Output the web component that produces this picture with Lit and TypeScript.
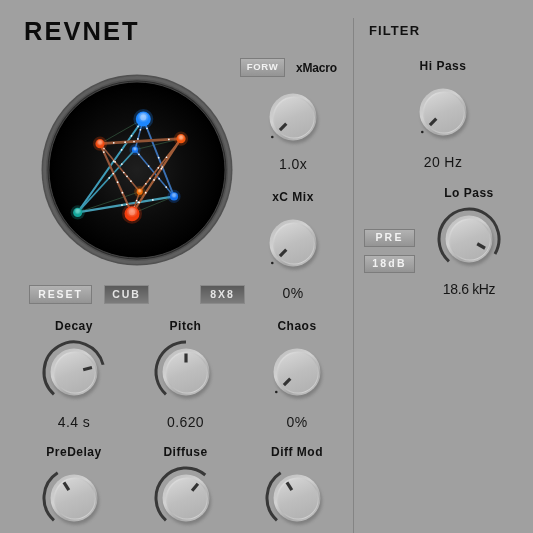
import { LitElement, html, css, svg } from "lit";
import { customElement, property } from "lit/decorators.js";

@customElement("rv-knob")
class RvKnob extends LitElement {
  @property() label = "";
  @property() value = "";
  @property({ type: Number }) angle = -135;
  static styles = css`
    :host { display: flex; flex-direction: column; align-items: center; width: 100px; font-family: "Liberation Sans", Arial, sans-serif; }
    .label { height: 16px; line-height: 16px; font-size: 12px; font-weight: 700; letter-spacing: 0.5px; color: #111; white-space: nowrap; }
    svg { display: block; width: 68px; height: 68px; margin-top: 4px; overflow: visible; }
    .value { height: 16px; line-height: 16px; margin-top: var(--vgap, 8px); font-size: 14px; letter-spacing: var(--vls, 0.4px); color: #161616; white-space: nowrap; }
  `;
  private pt(r: number, deg: number) {
    const a = (deg * Math.PI) / 180;
    return [r * Math.sin(a), -r * Math.cos(a)];
  }
  render() {
    const start = -138;
    const [sx, sy] = this.pt(30, start);
    const [ex, ey] = this.pt(30, this.angle);
    const large = this.angle - start > 180 ? 1 : 0;
    const [ix, iy] = this.pt(9.5, this.angle);
    const [jx, jy] = this.pt(18.5, this.angle);
    const atMin = this.angle <= -135;
    return html`
      <div class="label">${this.label}</div>
      <svg viewBox="-34 -34 68 68">
        <defs>
          <linearGradient id="cap" x1="0.25" y1="0" x2="0.65" y2="1">
            <stop offset="0" stop-color="#d4d4d4" />
            <stop offset="0.5" stop-color="#bebebe" />
            <stop offset="1" stop-color="#b2b2b2" />
          </linearGradient>
          <linearGradient id="rim" x1="0.1" y1="0" x2="0.8" y2="1">
            <stop offset="0" stop-color="#bdbdbd" />
            <stop offset="0.4" stop-color="#d2d2d2" />
            <stop offset="0.75" stop-color="#a8a8a8" />
            <stop offset="1" stop-color="#c6c6c6" />
          </linearGradient>
          <linearGradient id="inner" x1="0.1" y1="0" x2="0.8" y2="1">
            <stop offset="0" stop-color="#e4e4e4" />
            <stop offset="0.55" stop-color="#b6b6b6" />
            <stop offset="1" stop-color="#d8d8d8" />
          </linearGradient>
          <filter id="blur" x="-30%" y="-30%" width="160%" height="160%"><feGaussianBlur stdDeviation="1.8" /></filter>
        </defs>
        <circle cx="1.5" cy="3.2" r="23.5" fill="#666" opacity="0.55" filter="url(#blur)" />
        <circle r="23.5" fill="url(#rim)" />
        <circle cx="0.8" cy="0.5" r="21" fill="url(#inner)" />
        <circle cx="1" cy="0.8" r="19.8" fill="url(#cap)" />
        ${atMin
          ? svg`<circle cx="${-20.7}" cy="${20}" r="1.3" fill="#222" />`
          : svg`<path d="M${sx} ${sy} A30 30 0 ${large} 1 ${ex} ${ey}" fill="none" stroke="#383838" stroke-width="3" />`}
        <line x1="${ix}" y1="${iy}" x2="${jx}" y2="${jy}" stroke="#333" stroke-width="3.2" />
      </svg>
      <div class="value">${this.value}</div>
    `;
  }
}

const nodes: Record<string, [number, number, number, string, string]> = {
  bb: [143.3, 119.3, 7.5, "#1c86ff", "#a8d0ff"],
  tr: [181, 139, 4.6, "#f2560f", "#ffb080"],
  tl: [100, 144, 4.6, "#f04a10", "#ff9a70"],
  sb: [135, 150, 3.1, "#1878f5", "#80b8ff"],
  om: [139.7, 192, 3.1, "#f06a05", "#ffb060"],
  br: [174, 196.7, 4.1, "#1470f0", "#70b0ff"],
  te: [77.7, 212.7, 4.6, "#12a59a", "#50d0c4"],
  bo: [132, 214, 7.5, "#f23c0c", "#ff9a78"],
};
const edges: [string, string, string, number, number[]][] = [
  ["te", "bb", "#3f9dba", 2, [0.55, 0.67, 0.82, 0.92]],
  ["te", "sb", "#3a94ae", 1.7, [0.55, 0.62, 0.77]],
  ["te", "br", "#459cb2", 2.2, [0.46, 0.51, 0.63, 0.78]],
  ["bb", "br", "#3a70b4", 1.9, [0.12, 0.5, 0.62]],
  ["sb", "br", "#3a70b4", 1.5, [0.1, 0.35, 0.62, 0.8]],
  ["sb", "bb", "#3a70b4", 1.5, [0.35, 0.65]],
  ["tl", "tr", "#8f5234", 2.8, [0.17, 0.31, 0.42, 0.85]],
  ["tl", "bo", "#94563a", 2.1, [0.12, 0.55, 0.7]],
  ["tl", "om", "#94563a", 1.6, [0.1, 0.38, 0.6, 0.68, 0.78]],
  ["tr", "bo", "#a05c38", 2.2, [0.4, 0.55, 0.72, 0.85]],
  ["tr", "om", "#a05c38", 1.7, [0.35, 0.55, 0.75, 0.85]],
  ["om", "bo", "#94563a", 1.5, [0.4, 0.7]],
];
const faint: [string, string][] = [["te", "om"], ["sb", "tr"], ["bb", "tl"], ["bo", "br"]];

@customElement("rv-scope")
class RvScope extends LitElement {
  static styles = css`
    :host { display: block; width: 196px; height: 196px; }
    svg { display: block; width: 196px; height: 196px; overflow: visible; }
  `;
  render() {
    return html`<svg viewBox="39 72.3 196 196">
      <defs>
        <radialGradient id="bg">
          <stop offset="0" stop-color="#1f1f1f" />
          <stop offset="0.55" stop-color="#0c0c0c" />
          <stop offset="1" stop-color="#000" />
        </radialGradient>
        <radialGradient id="shine" cx="0.5" cy="0.35" r="0.6">
          <stop offset="0" stop-color="#fff" stop-opacity="0.55" />
          <stop offset="1" stop-color="#fff" stop-opacity="0" />
        </radialGradient>
        <filter id="soft" x="-20%" y="-20%" width="140%" height="140%"><feGaussianBlur stdDeviation="0.35" /></filter>
        <filter id="ring" x="-5%" y="-5%" width="110%" height="110%"><feGaussianBlur stdDeviation="0.7" /></filter>
      </defs>
      <circle cx="137" cy="170.3" r="95.5" fill="#515151" filter="url(#ring)" />
      <circle cx="137" cy="170.3" r="92.5" fill="none" stroke="#5e5e5e" stroke-width="3" filter="url(#ring)" />
      <circle cx="137" cy="170.3" r="89.5" fill="#2c2c2c" />
      <circle cx="137" cy="170.3" r="88" fill="#000" stroke="#555" stroke-width="0.7" />
      <circle cx="137" cy="170.3" r="86.5" fill="url(#bg)" />
      <g filter="url(#soft)">
        ${faint.map(([a, b]) => svg`<line x1="${nodes[a][0]}" y1="${nodes[a][1]}" x2="${nodes[b][0]}" y2="${nodes[b][1]}" stroke="#31503a" stroke-width="0.8" />`)}
        ${edges.map(([a, b, c, w]) => svg`<line x1="${nodes[a][0]}" y1="${nodes[a][1]}" x2="${nodes[b][0]}" y2="${nodes[b][1]}" stroke="${c}" stroke-width="${w}" />`)}
        ${edges.flatMap(([a, b, , , ts]) =>
          ts.map((t) => {
            const x = nodes[a][0] + (nodes[b][0] - nodes[a][0]) * t;
            const y = nodes[a][1] + (nodes[b][1] - nodes[a][1]) * t;
            return svg`<circle cx="${x}" cy="${y}" r="0.85" fill="#fff" />`;
          })
        )}
      </g>
      ${Object.values(nodes).map(
        ([x, y, r, c, h]) => svg`
          <circle cx="${x}" cy="${y}" r="${r + 2.5}" fill="${c}" opacity="0.25" />
          <circle cx="${x}" cy="${y}" r="${r}" fill="${c}" />
          <circle cx="${x}" cy="${y - r * 0.15}" r="${r * 0.72}" fill="url(#shine)" />
          <circle cx="${x}" cy="${y - r * 0.2}" r="${r * 0.4}" fill="${h}" opacity="0.6" />
        `
      )}
    </svg>`;
  }
}

@customElement("app-root")
class AppRoot extends LitElement {
  static styles = css`
    :host { display: block; width: 533px; height: 533px; overflow: hidden; background: #a0a0a0; font-family: "Liberation Sans", Arial, sans-serif; }
    .page { display: flex; height: 533px; filter: blur(0.3px); }
    .main { width: 354px; flex: none; box-sizing: border-box; border-right: 1px solid #848484; margin-top: 18px; height: 515px; }
    .top { display: flex; height: 289px; }
    .lcol { width: 240px; flex: none; }
    h1 { margin: 0 0 0 24px; font-size: 25.5px; line-height: 26px; height: 26px; letter-spacing: 2.05px; font-weight: 700; color: #0c0c0c; }
    rv-scope { margin: 28px 0 0 39px; }
    .btnrow { display: flex; margin: 17px 0 0 29px; width: 230px; }
    .btn { flex: none; box-sizing: border-box; width: 45px; height: 19px; line-height: 16px; text-align: center; font-size: 10.5px; font-weight: 700; letter-spacing: 1.9px; color: #f2f2f2; border: 1px solid #7c7c7c; background: linear-gradient(#b2b2b2, #949494); white-space: nowrap; }
    .btn.dark { background: linear-gradient(#5a5a5a, #7c7c7c); border-color: #8a8a8a; color: #e4e4e4; }
    .btn.narrow { font-size: 9.5px; letter-spacing: 0.7px; }
    .reset { width: 63px; margin-right: 12px; }
    .cub { margin-right: 51px; }
    .rcol { flex: none; width: 110px; display: flex; flex-direction: column; margin-top: 40px; }
    .forw { display: flex; align-items: center; }
    .xmacro { font-size: 12px; font-weight: 700; letter-spacing: -0.2px; color: #111; margin-left: 11px; }
    .rcol rv-knob.a { margin: -14px 0 0 3px; --vgap: 5px; }
    .rcol rv-knob.b { margin: 17px 0 0 3px; --vgap: 8px; }
    .bottom { display: grid; grid-template-columns: repeat(3, 100px); column-gap: 11.5px; margin: 11px 0 0 24px; row-gap: 14px; }
    .filter { flex: 1; min-width: 0; }
    h2 { margin: 23px 0 0 15px; font-size: 13px; line-height: 16px; font-weight: 700; letter-spacing: 1.1px; color: #111; }
    .hi { margin: 19px 0 0 39px; }
    .lorow { display: flex; margin-top: 15px; }
    .fbtns { display: flex; flex-direction: column; gap: 8px; margin: 44px 0 0 10px; }
    .fbtns .btn { width: 51px; height: 18px; line-height: 15px; letter-spacing: 2.2px; }
    .lo { margin-left: 4px; --vls: -0.35px; }
  `;
  render() {
    return html`<div class="page">
      <div class="main">
        <div class="top">
          <div class="lcol">
            <h1>REVNET</h1>
            <rv-scope></rv-scope>
            <div class="btnrow">
              <div class="btn reset">RESET</div>
              <div class="btn dark cub">CUB</div>
              <div class="btn dark">8X8</div>
            </div>
          </div>
          <div class="rcol">
            <div class="forw"><div class="btn narrow">FORW</div><span class="xmacro">xMacro</span></div>
            <rv-knob class="a" angle="-135" value="1.0x"></rv-knob>
            <rv-knob class="b" label="xC Mix" angle="-135" value="0%"></rv-knob>
          </div>
        </div>
        <div class="bottom">
          <rv-knob label="Decay" angle="76" value="4.4 s"></rv-knob>
          <rv-knob label="Pitch" angle="0" value="0.620"></rv-knob>
          <rv-knob label="Chaos" angle="-135" value="0%"></rv-knob>
          <rv-knob label="PreDelay" angle="-33"></rv-knob>
          <rv-knob label="Diffuse" angle="40"></rv-knob>
          <rv-knob label="Diff Mod" angle="-33"></rv-knob>
        </div>
      </div>
      <div class="filter">
        <h2>FILTER</h2>
        <rv-knob class="hi" label="Hi Pass" angle="-135" value="20 Hz"></rv-knob>
        <div class="lorow">
          <div class="fbtns"><div class="btn">PRE</div><div class="btn">18dB</div></div>
          <rv-knob class="lo" label="Lo Pass" angle="120" value="18.6 kHz"></rv-knob>
        </div>
      </div>
    </div>`;
  }
}
